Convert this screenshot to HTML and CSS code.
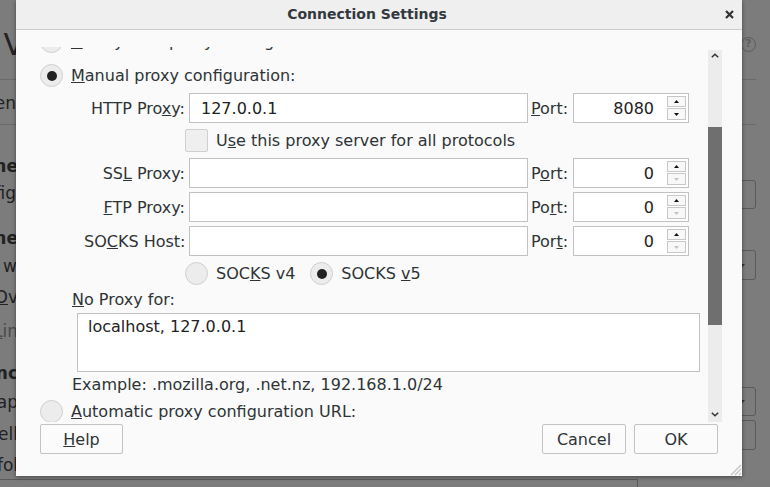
FILE: index.html
```html
<!DOCTYPE html>
<html>
<head>
<meta charset="utf-8">
<title>Connection Settings</title>
<link rel="stylesheet" href="styles.css">
</head>
<body>
<div class="page">
  <div class="bg">
    <div class="bg-main">
      <div class="bg-left">
        <div class="frag big f1"><span>l V</span></div>
        <div class="bg-line l1"></div>
        <div class="frag f2"><span>Open</span></div>
        <div class="bg-line l2"></div>
        <div class="frag bold f3"><span>ne</span></div>
        <div class="frag f4"><span>Config</span></div>
        <div class="frag bold f5"><span>ne</span></div>
        <div class="frag f6"><span>w</span></div>
        <div class="frag f7"><span><u>O</u>v</span></div>
        <div class="frag dim f8"><span><u>L</u>in</span></div>
        <div class="frag bold f9"><span>nc</span></div>
        <div class="frag f10"><span>ap</span></div>
        <div class="frag f11"><span>Fell</span></div>
        <div class="frag f12"><span>fol</span></div>
      </div>
      <div class="bg-spacer"></div>
      <div class="bg-right">
        <span class="help-icon">?</span>
        <div class="bg-rline r1"></div>
        <div class="bg-rline r2"></div>
        <div class="bg-box b1"></div>
        <div class="bg-box b2"><svg class="dd" width="5" height="3" viewBox="0 0 5 3"><polygon points="0,0 5,0 2.5,3" fill="#333"/></svg></div>
        <div class="bg-box b3"><svg class="dd" width="5" height="3" viewBox="0 0 5 3"><polygon points="0,0 5,0 2.5,3" fill="#333"/></svg></div>
        <div class="bg-box b4"></div>
      </div>
    </div>
    <div class="bg-bottom"></div>
  </div>

  <div class="dialog">
    <div class="titlebar">
      <div class="title">Connection Settings</div>
      <div class="close">
        <svg width="9" height="9" viewBox="0 0 9 9"><path d="M1 1 L8 8 M8 1 L1 8" stroke="#333" stroke-width="2.2" fill="none"/></svg>
      </div>
    </div>
    <div class="body">
      <div class="scroller">
        <div class="viewport">
          <div class="content">
            <div class="radio-row row-a"><span class="radio"></span><span><u>U</u>se system proxy settings</span></div>
            <div class="radio-row row-b"><span class="radio on"></span><span><u>M</u>anual proxy configuration:</span></div>
            <div class="proxy-grid">
              <span class="plabel">HTTP Pro<u>x</u>y:</span>
              <input class="field" type="text" value="127.0.0.1">
              <span class="port"><u>P</u>ort:</span>
              <div class="spin"><span class="spin-val">8080</span><span class="spin-btns"><span class="sbtn up"><svg width="5" height="3" viewBox="0 0 5 3"><polygon points="2.5,0 5,3 0,3" fill="#111"/></svg></span><span class="sbtn down"><svg width="5" height="3" viewBox="0 0 5 3"><polygon points="0,0 5,0 2.5,3" fill="#111"/></svg></span></span></div>

              <div class="wide opt-row"><span class="checkbox"></span><span>U<u>s</u>e this proxy server for all protocols</span></div>

              <span class="plabel">SS<u>L</u> Proxy:</span>
              <input class="field" type="text" value="">
              <span class="port">P<u>o</u>rt:</span>
              <div class="spin"><span class="spin-val">0</span><span class="spin-btns"><span class="sbtn up"><svg width="5" height="3" viewBox="0 0 5 3"><polygon points="2.5,0 5,3 0,3" fill="#111"/></svg></span><span class="sbtn down"><svg width="5" height="3" viewBox="0 0 5 3"><polygon points="0,0 5,0 2.5,3" fill="#c4c4c4"/></svg></span></span></div>

              <span class="plabel"><u>F</u>TP Proxy:</span>
              <input class="field" type="text" value="">
              <span class="port">Po<u>r</u>t:</span>
              <div class="spin"><span class="spin-val">0</span><span class="spin-btns"><span class="sbtn up"><svg width="5" height="3" viewBox="0 0 5 3"><polygon points="2.5,0 5,3 0,3" fill="#111"/></svg></span><span class="sbtn down"><svg width="5" height="3" viewBox="0 0 5 3"><polygon points="0,0 5,0 2.5,3" fill="#c4c4c4"/></svg></span></span></div>

              <span class="plabel">SO<u>C</u>KS Host:</span>
              <input class="field" type="text" value="">
              <span class="port">Por<u>t</u>:</span>
              <div class="spin"><span class="spin-val">0</span><span class="spin-btns"><span class="sbtn up"><svg width="5" height="3" viewBox="0 0 5 3"><polygon points="2.5,0 5,3 0,3" fill="#111"/></svg></span><span class="sbtn down"><svg width="5" height="3" viewBox="0 0 5 3"><polygon points="0,0 5,0 2.5,3" fill="#c4c4c4"/></svg></span></span></div>

              <div class="wide opt-row"><span class="radio"></span><span>SOC<u>K</u>S v4</span><span class="radio on second"></span><span>SOCKS <u>v</u>5</span></div>
            </div>
            <div class="np-label"><u>N</u>o Proxy for:</div>
            <textarea class="np-text">localhost, 127.0.0.1</textarea>
            <div class="example">Example: .mozilla.org, .net.nz, 192.168.1.0/24</div>
            <div class="radio-row row-auto"><span class="radio"></span><span><u>A</u>utomatic proxy configuration URL:</span></div>
            <div class="url-row"><input class="field" type="text" value=""></div>
          </div>
        </div>
        <div class="scrollbar">
          <div class="sb-btn"><svg width="8" height="5" viewBox="0 0 8 5"><polyline points="0.8,4.3 4,1.2 7.2,4.3" stroke="#333" stroke-width="1.5" fill="none"/></svg></div>
          <div class="sb-track"><div class="sb-thumb"></div></div>
          <div class="sb-btn down"><svg width="8" height="5" viewBox="0 0 8 5"><polyline points="0.8,0.7 4,3.8 7.2,0.7" stroke="#333" stroke-width="1.5" fill="none"/></svg></div>
        </div>
      </div>
      <div class="buttons">
        <button class="btn help"><span><u>H</u>elp</span></button>
        <div class="btn-spacer"></div>
        <button class="btn">Cancel</button>
        <button class="btn">OK</button>
      </div>
    </div>
    <svg class="grip" width="15" height="15" viewBox="0 0 15 15"><path d="M14 4 L4 14 M14 8 L8 14 M14 12 L12 14" stroke="#c2c2c2" stroke-width="1.2" fill="none"/></svg>
  </div>
</div>
</body>
</html>
```

FILE: styles.css
```css
* { box-sizing: border-box; }
html, body { margin: 0; padding: 0; }
body {
  width: 770px;
  height: 487px;
  overflow: hidden;
  font-family: "DejaVu Sans", sans-serif;
}
.page {
  position: relative;
  width: 770px;
  height: 487px;
  background: #7c7c7d;
  overflow: hidden;
}

/* ---------- background page ---------- */
.bg { display: flex; flex-direction: column; height: 100%; }
.bg-main { display: flex; height: 479px; }
.bg-left {
  width: 20px;
  display: flex;
  flex-direction: column;
  color: #222;
  font-size: 17px;
}
.frag {
  width: 18px;
  height: 20px;
  line-height: 20px;
  display: flex;
  justify-content: flex-end;
  white-space: nowrap;
}
.frag span { flex: none; }
.frag.bold { font-weight: bold; }
.frag.dim { color: #4a4a4a; }
.frag.big { font-size: 30px; height: 34px; line-height: 34px; width: 24px; }
.f1 { margin-top: 28px; }
.l1 { margin-top: 17px; }
.f2 { margin-top: 13px; width: 16px; }
.l2 { margin-top: 11px; }
.f3 { margin-top: 31px; }
.f4 { margin-top: 7px; width: 16px; }
.f5 { margin-top: 25px; }
.f6 { margin-top: 8px; width: 17px; }
.f7 { margin-top: 11px; }
.f8 { margin-top: 14px; }
.f9 { margin-top: 22px; }
.f10 { margin-top: 9px; }
.f11 { margin-top: 12px; }
.f12 { margin-top: 11px; }
.bg-line { width: 20px; height: 1px; background: #6a6a6b; flex: none; }

.bg-spacer { flex: 1; }
.bg-right {
  width: 14px;
  margin-right: 14px;
  display: flex;
  flex-direction: column;
}
.help-icon {
  width: 15px;
  height: 15px;
  margin: 37px 0 0 -1px;
  border: 1.5px solid #5c5c5c;
  border-radius: 50%;
  color: #5c5c5c;
  font-size: 10px;
  font-weight: bold;
  line-height: 12px;
  text-align: center;
  flex: none;
}
.bg-rline { height: 1px; margin-left: -20px; background: #6a6a6b; flex: none; }
.r1 { margin-top: 27px; }
.r2 { margin-top: 44px; }
.bg-box {
  margin-left: -30px;
  border: 1px solid #5a5a5a;
  border-radius: 3px;
  flex: none;
  display: flex;
  align-items: center;
  justify-content: flex-end;
  padding-right: 10px;
}
.b1 { margin-top: 55px; height: 29px; }
.b2 { margin-top: 41px; height: 30px; }
.b3 { margin-top: 107px; height: 29px; }
.b4 { margin-top: 4px; height: 30px; }
.bg-bottom {
  width: 638px;
  height: 8px;
  border-top: 1px solid #5a5a5a;
  border-right: 1px solid #5a5a5a;
}

/* ---------- dialog ---------- */
.dialog {
  position: absolute;
  left: 16px;
  top: 0;
  width: 726px;
  height: 476px;
  background: #fafafa;
  box-shadow: 0 1px 4px rgba(0, 0, 0, 0.45);
  display: flex;
  flex-direction: column;
  color: #2e3436;
  font-size: 16px;
}
.titlebar {
  height: 30px;
  flex: none;
  background: #efefef;
  border-bottom: 1px solid #cdcdcd;
  display: flex;
  align-items: center;
  padding-bottom: 1px;
}
.title {
  flex: 1;
  text-align: center;
  font-size: 14px;
  font-weight: bold;
  color: #33383e;
}
.close {
  width: 24px;
  display: flex;
  justify-content: center;
  padding-right: 2px;
}
.close svg { display: block; }

.body {
  flex: 1;
  display: flex;
  flex-direction: column;
  padding: 17px 24px 22px;
}
.scroller {
  display: flex;
  height: 375px;
  flex: none;
  margin-right: -4px;
}
.viewport {
  flex: 1;
  overflow: hidden;
}
.content {
  display: flex;
  flex-direction: column;
  margin-top: -17px;
}

.radio-row {
  display: flex;
  align-items: center;
  height: 23px;
  white-space: nowrap;
}
.row-b { margin-top: 11px; }
.row-auto { margin-top: 6px; }

.radio {
  width: 23px;
  height: 23px;
  flex: none;
  border-radius: 50%;
  border: 1px solid #cfcfcf;
  background: #ececec;
  margin-right: 8px;
  display: flex;
  align-items: center;
  justify-content: center;
}
.radio.on::after {
  content: "";
  width: 10px;
  height: 10px;
  border-radius: 50%;
  background: #222;
}
.radio.second { margin-left: 15px; }
.checkbox {
  width: 23px;
  height: 23px;
  flex: none;
  border: 1px solid #cfcfcf;
  border-radius: 2px;
  background: #efefef;
  margin-right: 8px;
}

.proxy-grid {
  margin-top: 6px;
  margin-left: 44px;
  display: grid;
  grid-template-columns: 105px 339px 45px 116px;
  row-gap: 4px;
  align-items: center;
}
.plabel {
  text-align: right;
  padding-right: 4px;
  white-space: nowrap;
}
.port {
  padding-left: 3px;
  white-space: nowrap;
}
.wide {
  grid-column: 2 / -1;
  margin: 2px 0 2px -4px;
}
.opt-row {
  display: flex;
  align-items: center;
  height: 23px;
  white-space: nowrap;
}

.field {
  width: 100%;
  height: 30px;
  border: 1px solid #c2c2c2;
  border-radius: 0;
  background: #fff;
  padding: 0 11px;
  font: inherit;
  color: #222;
  outline: none;
  margin: 0;
}
.spin {
  height: 30px;
  border: 1px solid #c2c2c2;
  background: #fff;
  display: flex;
  align-items: center;
}
.spin-val {
  flex: 1;
  text-align: right;
  padding-right: 13px;
  color: #222;
}
.spin-btns {
  display: flex;
  flex-direction: column;
  gap: 1px;
  margin-right: 2px;
  padding-top: 0;
}
.sbtn {
  width: 19px;
  height: 11px;
  border: 1px solid #c8c8c8;
  background: #f8f8f8;
  display: flex;
  align-items: center;
  justify-content: center;
}
.sbtn.down { height: 12px; }
.sbtn svg { display: block; }

.np-label {
  margin-top: 3px;
  padding-left: 32px;
  line-height: 19px;
}
.np-text {
  display: block;
  margin: 4px 0 0 37px;
  width: 623px;
  height: 59px;
  border: 1px solid #c2c2c2;
  background: #fff;
  padding: 3px 10px;
  font: inherit;
  line-height: normal;
  color: #222;
  resize: none;
  overflow: hidden;
  outline: none;
}
.example {
  margin-top: 3px;
  padding-left: 32px;
  line-height: 19px;
}
.url-row {
  margin: 6px 0 0 44px;
  width: 560px;
}

.scrollbar {
  width: 14px;
  height: 372px;
  margin-top: 3px;
  background: #ececec;
  display: flex;
  flex-direction: column;
  flex: none;
}
.sb-btn {
  height: 14px;
  display: flex;
  justify-content: center;
  padding-top: 3px;
  flex: none;
}
.sb-btn.down { padding-top: 4px; }
.sb-btn svg { display: block; }
.sb-track { flex: 1; }
.sb-thumb {
  margin-top: 63px;
  height: 198px;
  background: #6f6f6f;
}

.buttons {
  margin-top: 2px;
  height: 30px;
  display: flex;
  gap: 8px;
}
.btn-spacer { flex: 1; }
.btn {
  width: 84px;
  height: 30px;
  border: 1px solid #c3c3c3;
  border-radius: 2px;
  background: #fbfbfb;
  font: inherit;
  color: #2e3436;
  padding: 0;
  display: flex;
  align-items: center;
  justify-content: center;
}
.btn.help { width: 83px; }

.grip {
  position: absolute;
  right: 0;
  bottom: 0;
  display: block;
}
```
